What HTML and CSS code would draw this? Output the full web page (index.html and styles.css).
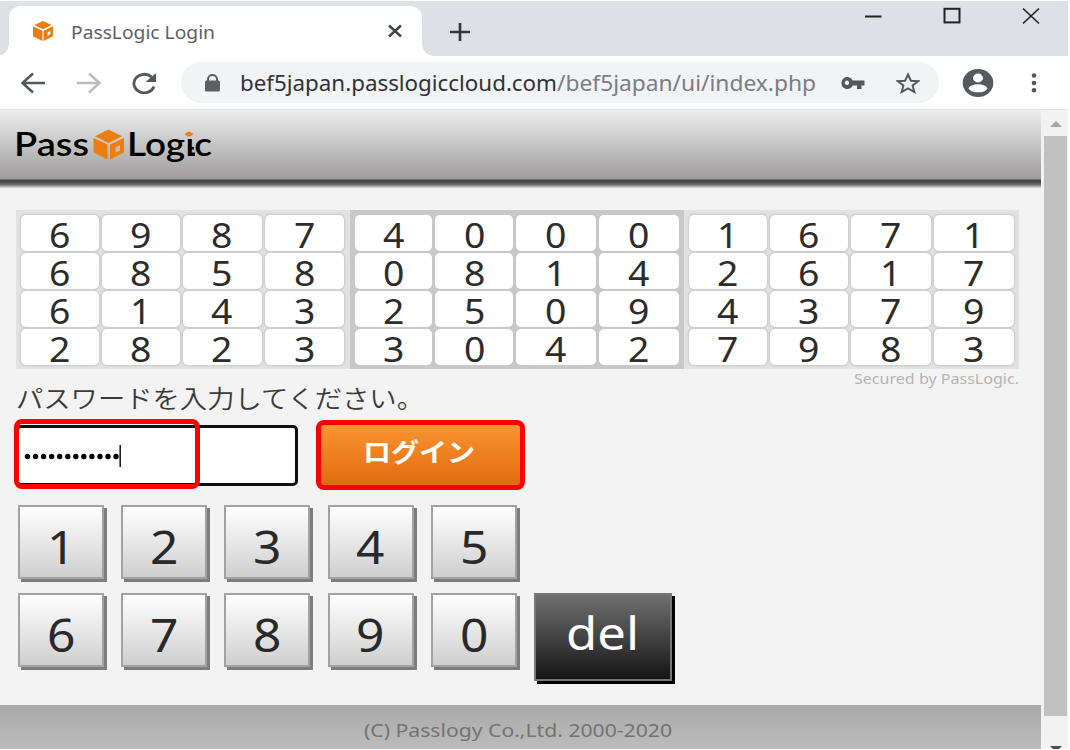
FILE: index.html
```html
<!DOCTYPE html>
<html lang="ja">
<head>
<meta charset="utf-8">
<title>PassLogic Login</title>
<link rel="stylesheet" href="styles.css">
</head>
<body>
<div class="window">
  <div class="tabstrip">
    <div class="tab">
      <svg class="favicon" width="22" height="20" viewBox="0 0 32 30"><g fill="#ee7d11"><path d="M16 0 29 6 16 12.500 3 6z"/><path d="M1 8 15.200 14.500V30L1 23z"/><path fill-rule="evenodd" d="M31 8 16.800 14.500V30L31 23zM27 15v5l-4 2v-5z"/></g></svg>
      <svg class="label" width="146" height="28"><text x="0" y="22" textLength="144" lengthAdjust="spacingAndGlyphs" class="tab-title">PassLogic Login</text></svg>
      <svg class="tab-close" width="14" height="14" viewBox="0 0 14 14"><path d="M1 1.500 13 12.500M13 1.500 1 12.500" stroke="#3f4247" stroke-width="2.400"/></svg>
    </div>
    <svg class="new-tab" width="22" height="20" viewBox="0 0 22 20"><path d="M1 10H21M11 1V19" stroke="#33363a" stroke-width="2.600"/></svg>
    <div class="controls">
      <svg width="18" height="18" viewBox="0 0 18 18"><path d="M1 9.500H17.500" stroke="#222" stroke-width="2"/></svg>
      <svg width="18" height="18" viewBox="0 0 18 18"><rect x="1.500" y="1.800" width="15" height="13.600" fill="none" stroke="#222" stroke-width="2"/></svg>
      <svg width="18" height="18" viewBox="0 0 18 18"><path d="M1 1.500 17 16.500M17 1.500 1 16.500" stroke="#222" stroke-width="1.600"/></svg>
    </div>
  </div>
  <div class="toolbar">
    <svg class="back" width="26" height="22" viewBox="0 0 26 22"><path d="M25 11H3M13 1.500 2.500 11 13 20.500" fill="none" stroke="#54575c" stroke-width="2.500"/></svg>
    <svg class="forward" width="26" height="22" viewBox="0 0 26 22"><path d="M1 11H23M13 1.500 23.500 11 13 20.500" fill="none" stroke="#bbbcbe" stroke-width="2.500"/></svg>
    <svg class="reload" width="26" height="22" viewBox="0 0 26 22"><path d="M23 14.500A10.300 9.300 0 1 1 20.500 5" fill="none" stroke="#54575c" stroke-width="2.800"/><path d="M25 1V10H14.500z" fill="#54575c"/></svg>
    <div class="omnibox">
      <svg class="lock" width="15" height="18" viewBox="0 0 15 18"><rect y="6.500" width="15" height="11" rx="1.500" fill="#5c5f63"/><path d="M3 8V5a4.500 4 0 0 1 9 0V8" fill="none" stroke="#5c5f63" stroke-width="2"/></svg>
      <svg class="label" width="578" height="30"><text x="0" y="22.500" class="url" textLength="317" lengthAdjust="spacingAndGlyphs">bef5japan.passlogiccloud.com</text><text x="317" y="22.500" class="url url-path" textLength="259" lengthAdjust="spacingAndGlyphs">/bef5japan/ui/index.php</text></svg>
      <svg class="key" width="24" height="14" viewBox="0 0 24 14"><path fill-rule="evenodd" fill="#54575c" d="M11.800 4.500H23.500V9.500H20.500V13H16V9.500H11.800A6 6 0 1 1 11.800 4.500zM6 4.600a2.200 2.200 0 1 0 .01 0z"/></svg>
      <svg class="star" width="24" height="22" viewBox="0 0 24 22"><path d="M12 2.500 14.900 8.700 22 9.200 16.600 13.500 18.300 20 12 16.500 5.700 20 7.400 13.500 2 9.200 9.100 8.700z" fill="none" stroke="#54575c" stroke-width="2"/></svg>
    </div>
    <svg class="avatar" width="32" height="28" viewBox="0 0 32 28"><ellipse cx="16" cy="14" rx="15.300" ry="14" fill="#565960"/><ellipse cx="16" cy="9" rx="5" ry="4.400" fill="#fff"/><ellipse cx="16" cy="19.300" rx="9.200" ry="4" fill="#fff"/></svg>
    <svg class="menu" width="6" height="20" viewBox="0 0 6 20"><g fill="#54575c"><circle cx="3" cy="2.500" r="2.300"/><circle cx="3" cy="10" r="2.300"/><circle cx="3" cy="17.300" r="2.300"/></g></svg>
  </div>
  <div class="viewport">
    <div class="page">
      <header class="header">
        <svg class="label" width="200" height="40" viewBox="0 0 200 40">
          <text x="-1" y="27" class="brand" textLength="75" lengthAdjust="spacingAndGlyphs">Pass</text>
          <g fill="#ee7d11"><path d="M93.500 .5 107 7.200 93.500 14 80 7.200z"/><path d="M78.500 9 92.500 15.500V30.500L78.500 23.500z"/><path fill-rule="evenodd" d="M109 9 95 15.500V30.500L109 23.500zM105 16v5.500l-4.500 2.300v-5.300z"/></g>
          <text x="112" y="27" class="brand" textLength="85" lengthAdjust="spacingAndGlyphs">Logıc</text>
          <path d="M174 2.500 178.500 4.800 175.500 7.500H172.500L169.500 4.800z" fill="#ee7d11"/><path d="M175 18h4v2.500h-4zM175 23.500h5v3.500h-5z"/>
        </svg>
      </header>
      <main class="content">
        <div class="matrix">
          <div class="block">
            <span><b>6</b></span><span><b>9</b></span><span><b>8</b></span><span><b>7</b></span>
            <span><b>6</b></span><span><b>8</b></span><span><b>5</b></span><span><b>8</b></span>
            <span><b>6</b></span><span><b>1</b></span><span><b>4</b></span><span><b>3</b></span>
            <span><b>2</b></span><span><b>8</b></span><span><b>2</b></span><span><b>3</b></span>
          </div>
          <div class="block block-dark">
            <span><b>4</b></span><span><b>0</b></span><span><b>0</b></span><span><b>0</b></span>
            <span><b>0</b></span><span><b>8</b></span><span><b>1</b></span><span><b>4</b></span>
            <span><b>2</b></span><span><b>5</b></span><span><b>0</b></span><span><b>9</b></span>
            <span><b>3</b></span><span><b>0</b></span><span><b>4</b></span><span><b>2</b></span>
          </div>
          <div class="block">
            <span><b>1</b></span><span><b>6</b></span><span><b>7</b></span><span><b>1</b></span>
            <span><b>2</b></span><span><b>6</b></span><span><b>1</b></span><span><b>7</b></span>
            <span><b>4</b></span><span><b>3</b></span><span><b>7</b></span><span><b>9</b></span>
            <span><b>7</b></span><span><b>9</b></span><span><b>8</b></span><span><b>3</b></span>
          </div>
        </div>
        <div class="secured"><svg class="label" width="166" height="16"><text x="0" y="14.500" class="secured-text" textLength="165" lengthAdjust="spacingAndGlyphs">Secured by PassLogic.</text></svg></div>
        <svg class="label" width="420" height="34"><text x="0" y="23" class="prompt" textLength="408" lengthAdjust="spacingAndGlyphs">パスワードを入力してください。</text></svg>
        <div class="form">
          <div class="password"><svg width="100" height="24" viewBox="0 0 100 24"><path d="M4.500 12.500H94" stroke="#000" stroke-width="5.400" stroke-linecap="round" stroke-dasharray="0 8.050"/><path d="M97.200 1V23" stroke="#222" stroke-width="1.600"/></svg><div class="mark mark-input"></div></div>
          <div class="login"><svg class="label" width="114" height="34"><text x="0" y="28.500" class="login-text" textLength="112" lengthAdjust="spacingAndGlyphs">ログイン</text></svg><div class="mark mark-login"></div></div>
        </div>
        <div class="keypad">
          <div class="key-btn"><b>1</b></div><div class="key-btn"><b>2</b></div><div class="key-btn"><b>3</b></div><div class="key-btn"><b>4</b></div><div class="key-btn"><b>5</b></div><div></div>
          <div class="key-btn"><b>6</b></div><div class="key-btn"><b>7</b></div><div class="key-btn"><b>8</b></div><div class="key-btn"><b>9</b></div><div class="key-btn"><b>0</b></div>
          <div class="del"><svg class="label" width="74" height="54"><text x="0" y="43.500" class="del-text" textLength="73" lengthAdjust="spacingAndGlyphs">del</text></svg></div>
        </div>
      </main>
      <footer class="footer"><svg class="label" width="310" height="28"><text x="0" y="20" class="footer-text" textLength="308" lengthAdjust="spacingAndGlyphs">(C) Passlogy Co.,Ltd. 2000-2020</text></svg></footer>
    </div>
    <div class="scrollbar">
      <svg width="12" height="6" viewBox="0 0 12 6"><path d="M6 0 12 6H0z" fill="#a3a3a3"/></svg>
      <div class="thumb"></div>
      <svg class="down" width="12" height="6" viewBox="0 0 12 6"><path d="M0 0H12L6 6z" fill="#505050"/></svg>
    </div>
  </div>
</div>
</body>
</html>
```
FILE: styles.css
```css
* { box-sizing: border-box; }
body { margin: 0; background: #fff; font-family: "Noto Sans", "Noto Sans CJK JP", sans-serif; overflow: hidden; }
svg { display: block; flex: none; }
.label { overflow: visible; }
.window { width: 1068px; height: 749px; padding-top: 1px; display: flex; flex-direction: column; }

.tabstrip { height: 55px; flex: none; display: flex; background: #dee0e6; padding-left: 9px; }
.tab { position: relative; width: 413px; margin-top: 5px; background: #fff; border-radius: 12px 12px 0 0; display: flex; align-items: center; padding: 0 20px 0 23px; }
.tab::before, .tab::after { content: ""; position: absolute; bottom: 0; width: 12px; height: 12px; }
.tab::before { left: -12px; background: radial-gradient(circle at 0 0, transparent 11.5px, #fff 12px); }
.tab::after { right: -12px; background: radial-gradient(circle at 100% 0, transparent 11.5px, #fff 12px); }
.favicon { margin-right: 17px; }
.tab-title { font-size: 18px; fill: #5b5e68; }
.tab-close { margin-left: auto; }
.new-tab { margin: 21px 0 0 27px; }
.controls { margin: 6px 28px 0 auto; display: flex; gap: 61px; }

.toolbar { height: 53px; flex: none; display: flex; align-items: center; background: #fff; padding-left: 20px; }
.forward { margin-left: 30px; }
.reload { margin-left: 29px; }
.omnibox { width: 758px; height: 41px; margin-left: 24px; border-radius: 21px; background: #f1f3f4; display: flex; align-items: center; padding-left: 24px; }
.lock { margin-right: 20px; }
.url { font-size: 21px; fill: #303238; }
.url-path { fill: #7a7d84; }
.key { margin-left: 23px; }
.star { margin-left: 31px; }
.avatar { margin-left: 23px; }
.menu { margin-left: 37px; }

.viewport { flex: 1; min-height: 0; display: flex; border-top: 1px solid #e3e3e3; }
.page { width: 1041px; background: #f3f3f3; display: flex; flex-direction: column; }
.header { height: 79px; flex: none; padding: 19px 0 0 15px; background: linear-gradient(#eee 0, #9e9c9d 69px, #464646 70px, #464646 72px, #777 75px, #e4e4e4 78px, #f3f3f3 79px); }
.brand { font-family: Lato, sans-serif; font-size: 33px; font-weight: 600; fill: #000; }
.content { flex: 1; min-height: 0; padding: 21px 0 0 16px; }
.matrix { width: 1003px; height: 159px; display: grid; grid-template-columns: 333.5px 334px 335.5px; }
.block { display: grid; grid-template-columns: 78fr 78fr 79.5fr 80fr; grid-template-rows: repeat(4, 35.5px); gap: 2.600px 3px; padding: 5px 5px 4px; background: #e2e2e2; }
.block-dark { background: #c8c8c8; }
.block span { display: flex; align-items: center; justify-content: center; background: #fff; border-radius: 5px; box-shadow: 0 0 2px 1px #c9c9c9; font-size: 34px; line-height: 30px; color: #2c2c2c; }
.block b { font-weight: 400; transform: translateY(2px) scaleX(1.1); }
.secured { height: 16px; width: 1004px; display: flex; justify-content: flex-end; }
.secured-text { font-size: 13.500px; fill: #b5b5b5; }
.prompt { font-family: "Noto Sans CJK JP", sans-serif; font-size: 25px; font-weight: 350; fill: #3a3a3a; }
.form { display: flex; align-items: flex-start; height: 86px; padding-top: 6px; }
.password { position: relative; width: 282px; height: 61px; background: #fff; border: 3px solid #101010; border-radius: 5px; padding: 16px 0 0 4px; }
.login { position: relative; width: 202px; height: 61px; margin-left: 22px; background: linear-gradient(#fa9433, #e16a0d); display: flex; justify-content: center; padding: 8px 2px 0 0; }
.login-text { font-family: "Noto Sans CJK JP", sans-serif; font-size: 26px; font-weight: 700; fill: #fff; }
.mark { position: absolute; border: 5px solid #f00; border-radius: 8px; }
.mark-input { left: -5px; top: -9px; width: 186px; height: 70px; }
.mark-login { left: -4px; top: -5px; width: 209px; height: 70px; }
.keypad { display: grid; grid-template-columns: repeat(5, 86px) 139px; grid-template-rows: 74px 89px; column-gap: 17.200px; row-gap: 14px; padding-left: 2px; }
.key-btn { height: 74px; background: linear-gradient(#fff, #cfcfcf); border: 2px solid #a2a2a2; box-shadow: 3px 3px 0 #7d7d7d; display: flex; justify-content: center; font-size: 46px; line-height: 78px; color: #29292c; }
.key-btn b { font-weight: 400; transform: scaleX(1.08); }
.del { width: 138px; height: 88px; border: 2px solid #777; box-shadow: 3px 3px 0 #000; background: linear-gradient(#707070, #151515); display: flex; justify-content: center; padding-top: 11px; }
.del-text { font-size: 45px; fill: #fff; }
.footer { height: 44px; flex: none; background: linear-gradient(#a9a9a9, #bcbcbc); display: flex; justify-content: center; padding: 12px 4px 0 0; }
.footer-text { font-size: 18.500px; fill: #737373; }
.scrollbar { width: 27px; background: #f2f2f2; display: flex; flex-direction: column; align-items: center; padding-top: 11px; padding-left: 2px; overflow: hidden; }
.thumb { width: 23px; height: 580px; flex: none; margin-top: 9px; background: #c1c1c1; }
.down { margin-top: 30px; }
```
